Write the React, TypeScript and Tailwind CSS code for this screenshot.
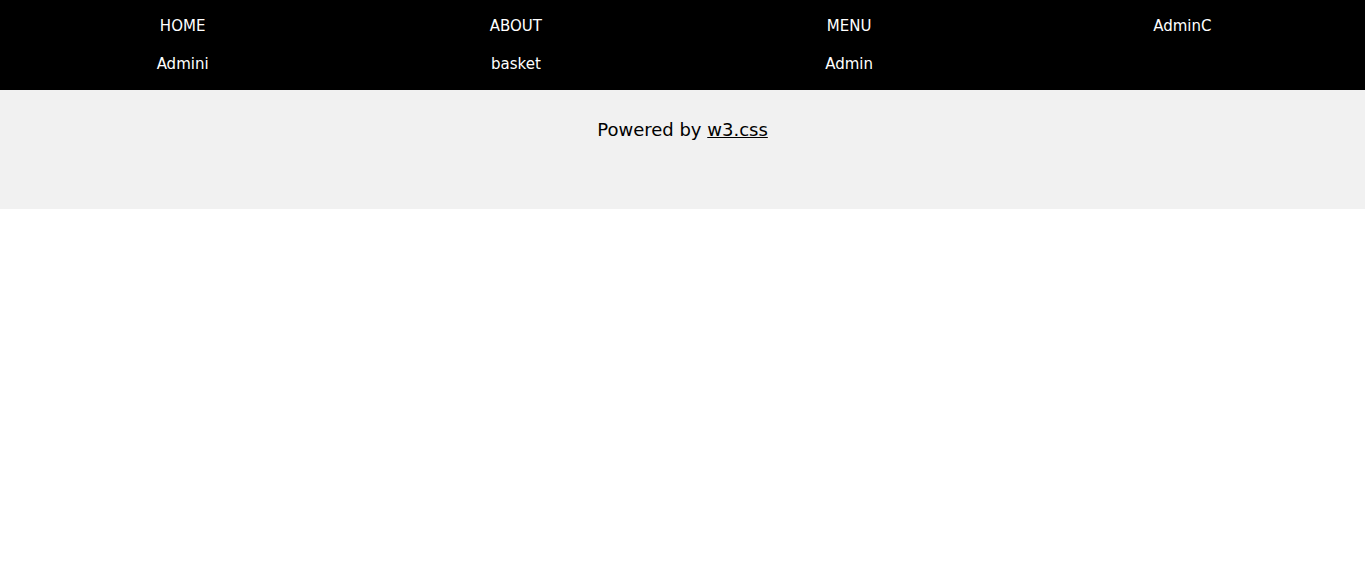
import React from "react"

const links = ["HOME", "ABOUT", "MENU", "AdminC", "Admini", "basket", "Admin"]

export default function App() {
  return (
    <div className="min-h-screen bg-white text-[15px] leading-[1.5] text-black [font-family:'DejaVu_Sans',Verdana,sans-serif]">
      <nav className="bg-black text-white px-4 pt-[7px] pb-[7px] grid grid-cols-4">
        {links.map((l) => (
          <a key={l} href="#" className="block text-center py-2 px-4 leading-[22px]">
            {l}
          </a>
        ))}
      </nav>
      <footer className="bg-[#f1f1f1] h-[119px] pt-[26px] text-center text-[18px]">
        <p>
          Powered by{" "}
          <a href="#" className="underline">
            w3.css
          </a>
        </p>
      </footer>
    </div>
  )
}
